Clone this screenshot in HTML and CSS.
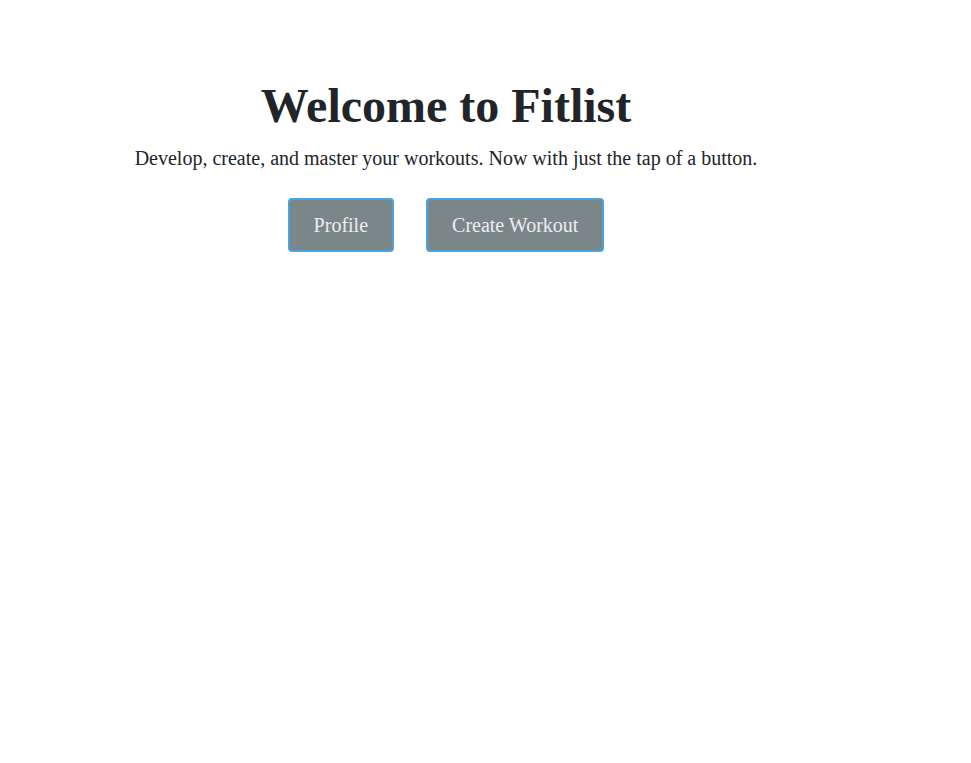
FILE: index.html
```html
<!DOCTYPE html>
<html lang="en">
<head>
<meta charset="utf-8">
<title>Fitlist</title>
<link rel="stylesheet" href="styles.css">
</head>
<body>
<main class="hero">
  <h1 class="hero-title">Welcome to Fitlist</h1>
  <p class="hero-lead">Develop, create, and master your workouts. Now with just the tap of a button.</p>
  <div class="hero-actions">
    <a class="btn" href="#">Profile</a>
    <a class="btn" href="#">Create Workout</a>
  </div>
</main>
</body>
</html>
```
FILE: styles.css
```css
html, body {
  margin: 0;
  padding: 0;
  background: #ffffff;
}
body {
  font-family: "Liberation Serif", "Times New Roman", serif;
  color: #212529;
}
.hero {
  width: 892px;
  padding-top: 77px;
  display: flex;
  flex-direction: column;
  align-items: center;
  text-align: center;
}
.hero-title {
  margin: 0;
  font-size: 48px;
  font-weight: bold;
  line-height: 1.2;
}
.hero-lead {
  margin: 8px 0 0;
  font-size: 20px;
  line-height: 1.5;
}
.hero-actions {
  display: flex;
  gap: 32px;
  margin-top: 25px;
}
.btn {
  display: inline-block;
  box-sizing: border-box;
  height: 54px;
  padding: 0 24px;
  line-height: 51px;
  font-size: 20px;
  color: #eeeeee;
  background: #7b8689;
  border: 2px solid #4aa3df;
  border-radius: 4px;
  text-decoration: none;
}
```
